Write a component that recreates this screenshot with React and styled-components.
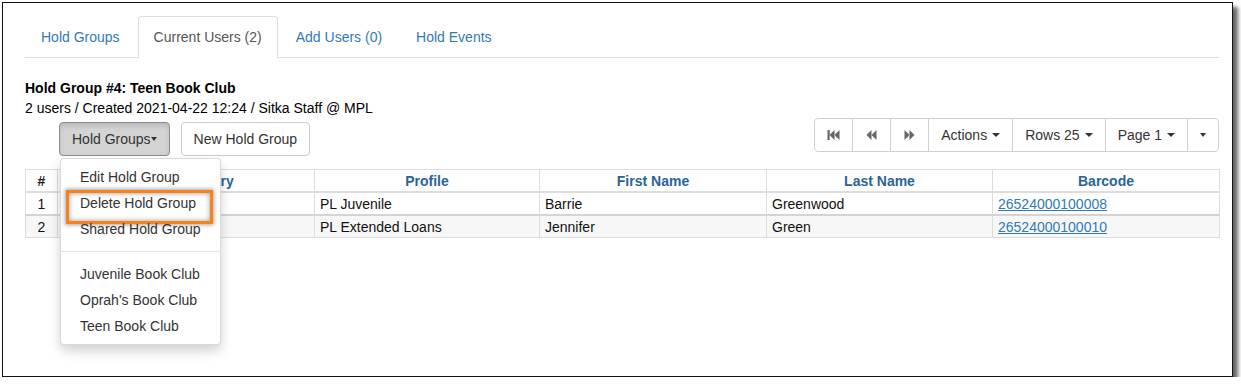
import React from "react";
import styled, { createGlobalStyle } from "styled-components";

const GlobalStyle = createGlobalStyle`
    body {
        margin: 0;
        background: #fff;
        font-family: "Liberation Sans", Arial, Helvetica, sans-serif;
        font-size: 14px;
        line-height: 20px;
        color: #333;
    }
    * {
        box-sizing: border-box;
    }
`;

const tabs = ["Hold Groups", "Current Users (2)", "Add Users (0)", "Hold Events"];

const users = [
    { n: 1, profile: "PL Juvenile", first: "Barrie", last: "Greenwood", barcode: "26524000100008" },
    { n: 2, profile: "PL Extended Loans", first: "Jennifer", last: "Green", barcode: "26524000100010" },
];

function FastBackward() {
    return (
        <svg width="13" height="14" viewBox="0 0 13 14">
            <rect x="0.5" y="2" width="2.2" height="10" fill="#666" />
            <polygon points="2.5,7 7.5,2 7.5,12" fill="#666" />
            <polygon points="7.5,7 12.5,2 12.5,12" fill="#666" />
        </svg>
    );
}

function Backward() {
    return (
        <svg width="13" height="14" viewBox="0 0 13 14">
            <polygon points="1.5,7 6.5,2 6.5,12" fill="#666" />
            <polygon points="6.5,7 11.5,2 11.5,12" fill="#666" />
        </svg>
    );
}

function Forward() {
    return (
        <svg width="13" height="14" viewBox="0 0 13 14">
            <polygon points="1.5,2 6.5,7 1.5,12" fill="#666" />
            <polygon points="6.5,2 11.5,7 6.5,12" fill="#666" />
        </svg>
    );
}

export default function App() {
    return (
        <>
            <GlobalStyle />
            <Frame>
                <TabBar>
                    {tabs.map((t, i) => (
                        <Tab key={t} $active={i === 1}>
                            {t}
                        </Tab>
                    ))}
                </TabBar>

                <Heading>
                    <Title>Hold Group #4: Teen Book Club</Title>
                    <Meta>2 users / Created 2021-04-22 12:24 / Sitka Staff @ MPL</Meta>
                </Heading>

                <Toolbar>
                    <LeftGroup>
                        <DropWrap>
                            <Button $pressed>
                                Hold Groups
                                <Caret $tight />
                            </Button>
                            <Menu>
                                <MenuItem>Edit Hold Group</MenuItem>
                                <MenuItem $marked>Delete Hold Group</MenuItem>
                                <MenuItem>Shared Hold Group</MenuItem>
                                <Divider />
                                <MenuItem>Juvenile Book Club</MenuItem>
                                <MenuItem>Oprah's Book Club</MenuItem>
                                <MenuItem>Teen Book Club</MenuItem>
                            </Menu>
                        </DropWrap>
                        <Button>New Hold Group</Button>
                    </LeftGroup>

                    <Pager>
                        <PagerButton>
                            <FastBackward />
                        </PagerButton>
                        <PagerButton>
                            <Backward />
                        </PagerButton>
                        <PagerButton>
                            <Forward />
                        </PagerButton>
                        <PagerButton>
                            Actions <Caret />
                        </PagerButton>
                        <PagerButton>
                            Rows 25 <Caret />
                        </PagerButton>
                        <PagerButton>
                            Page 1 <Caret />
                        </PagerButton>
                        <PagerButton>
                            <Caret $tight />
                        </PagerButton>
                    </Pager>
                </Toolbar>

                <Grid>
                    <colgroup>
                        <col style={{ width: 32 }} />
                        <col style={{ width: 257 }} />
                        <col style={{ width: 225 }} />
                        <col style={{ width: 227 }} />
                        <col style={{ width: 226 }} />
                        <col style={{ width: 227 }} />
                    </colgroup>
                    <thead>
                        <tr>
                            <Th $plain>#</Th>
                            <Th>Patron Library</Th>
                            <Th>Profile</Th>
                            <Th>First Name</Th>
                            <Th>Last Name</Th>
                            <Th>Barcode</Th>
                        </tr>
                    </thead>
                    <tbody>
                        {users.map((u, i) => (
                            <Row key={u.n} $striped={i % 2 === 1} $last={i === users.length - 1}>
                                <Td $center>{u.n}</Td>
                                <Td>MPL</Td>
                                <Td>{u.profile}</Td>
                                <Td>{u.first}</Td>
                                <Td>{u.last}</Td>
                                <Td>
                                    <BarcodeLink href="#">{u.barcode}</BarcodeLink>
                                </Td>
                            </Row>
                        ))}
                    </tbody>
                </Grid>
            </Frame>
        </>
    );
}

const Frame = styled.div`
    margin: 2px 0 0 2px;
    width: 1231px;
    height: 375px;
    border: 1px solid #111;
    background: #fff;
    box-shadow: 5px 5px 4px rgba(0, 0, 0, 0.6);
    padding: 13px 13px 0 22px;
`;

const TabBar = styled.div`
    display: flex;
    border-bottom: 1px solid #ddd;
    height: 42px;
`;

const Tab = styled.div`
    margin-right: 2px;
    padding: 10px 15px;
    border: 1px solid transparent;
    border-radius: 4px 4px 0 0;
    height: 42px;
    color: #337ab7;
    white-space: nowrap;
    ${(p) =>
        p.$active &&
        `
        color: #555;
        background: #fff;
        border-color: #ddd;
        border-bottom-color: #fff;
    `}
`;

const Heading = styled.div`
    margin-top: 20px;
`;

const Title = styled.div`
    font-weight: bold;
    color: #000;
`;

const Meta = styled.div`
    color: #000;
`;

const Toolbar = styled.div`
    display: flex;
    justify-content: space-between;
    align-items: flex-start;
    height: 38px;
`;

const LeftGroup = styled.div`
    display: flex;
    gap: 11px;
    margin: 4px 0 0 34px;
`;

const DropWrap = styled.div`
    position: relative;
`;

const Button = styled.div`
    display: flex;
    align-items: center;
    height: 34px;
    padding: 6px 12px;
    border: 1px solid #ccc;
    border-radius: 4px;
    background: #fff;
    color: #333;
    white-space: nowrap;
    ${(p) =>
        p.$pressed &&
        `
        background: #d4d4d4;
        border-color: #8c8c8c;
        box-shadow: inset 0 3px 5px rgba(0, 0, 0, 0.125);
    `}
`;

const Caret = styled.span`
    display: inline-block;
    width: 0;
    height: 0;
    margin-left: ${(p) => (p.$tight ? "0" : "2px")};
    vertical-align: middle;
    border-top: 4px solid #333;
    border-left: ${(p) => (p.$tight ? "3.5px" : "4px")} solid transparent;
    border-right: ${(p) => (p.$tight ? "3.5px" : "4px")} solid transparent;
`;

const Menu = styled.div`
    position: absolute;
    top: calc(100% + 2px);
    left: 1px;
    z-index: 5;
    width: 161px;
    padding: 5px 0;
    background: #fff;
    border: 1px solid rgba(0, 0, 0, 0.15);
    border-radius: 4px;
    box-shadow: 0 6px 12px rgba(0, 0, 0, 0.175);
`;

const MenuItem = styled.div`
    position: relative;
    padding: 3px 20px 3px 19px;
    color: #333;
    white-space: nowrap;
    ${(p) =>
        p.$marked &&
        `
        &::after {
            content: "";
            position: absolute;
            left: 5px;
            top: 0;
            width: 141px;
            height: 28px;
            border: 3px solid #f7821b;
            box-shadow: 0 0 4px 1px rgba(0, 0, 0, 0.35), inset 0 0 4px 1px rgba(0, 0, 0, 0.3);
        }
    `}
`;

const Divider = styled.div`
    height: 1px;
    margin: 9px 0;
    background: #e5e5e5;
`;

const Pager = styled.div`
    display: flex;
`;

const PagerButton = styled.div`
    display: flex;
    align-items: center;
    gap: 3px;
    height: 34px;
    padding: 6px 12px;
    border: 1px solid #d0d0d0;
    background: #fff;
    color: #333;
    white-space: nowrap;
    & + & {
        margin-left: -1px;
    }
    &:first-child {
        border-radius: 4px 0 0 4px;
    }
    &:last-child {
        border-radius: 0 4px 4px 0;
    }
`;

const Grid = styled.table`
    width: 1194px;
    margin-top: 13px;
    border-collapse: collapse;
    table-layout: fixed;
`;

const Th = styled.th`
    padding: 1px 5px 0;
    line-height: 20px;
    border: 1px solid #ddd;
    border-bottom: 2px solid #ddd;
    color: ${(p) => (p.$plain ? "#222" : "#2a6496")};
    font-weight: bold;
    text-align: center;
    white-space: nowrap;
    overflow: hidden;
`;

const Row = styled.tr`
    background: ${(p) => (p.$striped ? "#f7f7f7" : "#fff")};
    border-bottom: ${(p) => (p.$last ? "1px solid #ddd" : "2px solid #d4d4d4")};
`;

const Td = styled.td`
    padding: 1px 5px 0;
    line-height: 20px;
    border-left: 1px solid #ddd;
    border-right: 1px solid #ddd;
    color: #111;
    text-align: ${(p) => (p.$center ? "center" : "left")};
    white-space: nowrap;
    overflow: hidden;
`;

const BarcodeLink = styled.a`
    color: #337ab7;
    text-decoration: underline;
`;
